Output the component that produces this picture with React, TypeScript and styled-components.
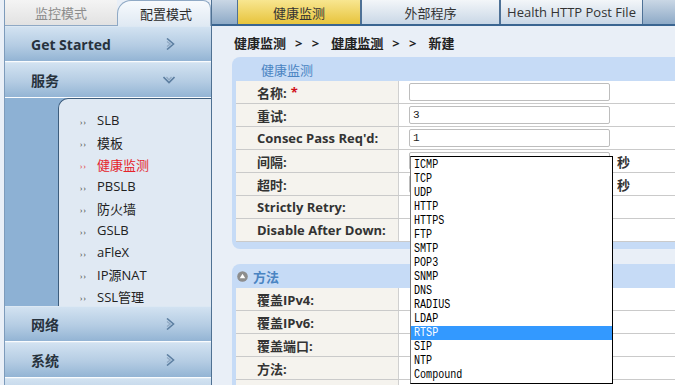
import React from 'react';
import styled, { createGlobalStyle } from 'styled-components';

const GlobalStyle = createGlobalStyle`
    html, body {
        margin: 0;
        padding: 0;
    }
    body {
        width: 675px;
        height: 385px;
        overflow: hidden;
        background: #e9eff7;
        font-family: "Open Sans", "Noto Sans CJK SC", sans-serif;
        font-size: 13px;
        color: #333;
    }
`

const Page = styled.div`
    display: flex;
    width: 675px;
    height: 385px;
    overflow: hidden;
`

/* ---------- sidebar ---------- */

const Sidebar = styled.div`
    width: 206px;
    flex-shrink: 0;
    margin-left: 4px;
    border-left: 1px solid #7d9bbb;
    border-right: 1px solid #4f7193;
    display: flex;
    flex-direction: column;
    background: #8db1d4;
    & > * {
        flex-shrink: 0;
    }
`

const ModeTabs = styled.div`
    display: flex;
    height: 26px;
    background: #e9eff7;
`

const ModeTab = styled.div<{ $active?: boolean }>`
    box-sizing: border-box;
    display: flex;
    align-items: center;
    justify-content: center;
    font-size: 13px;
    ${p => p.$active ? `
        flex: 1;
        color: #2b2b2b;
        background: linear-gradient(#f7fafd, #dfe9f3);
        border: 1px solid #8fa9c5;
        border-bottom: none;
        border-radius: 14px 8px 0 0;
        padding-left: 4px;
    ` : `
        width: 112px;
        color: #8c8c8c;
        background: linear-gradient(#f4f4f4, #e2e2e2);
        border-bottom: 1px solid #8fa9c5;
    `}
`

const SectionHeader = styled.div`
    height: 34px;
    border-top: 1px solid #dce8f3;
    border-bottom: 1px solid #fafcfe;
    background: linear-gradient(#d2e2f1, #b4cce3 55%, #93b4d4);
    display: flex;
    align-items: center;
    justify-content: space-between;
    padding: 0 36px 0 26px;
    font-size: 14px;
    font-weight: 700;
    color: #27323d;
`

const SubPanel = styled.div`
    display: flex;
    height: 208px;
`

const SubStrip = styled.div`
    width: 53px;
    background: #8db1d4;
`

const SubList = styled.div`
    flex: 1;
    background: #e0e9f3;
    border-left: 1px solid #3d5d7d;
    border-top: 1px solid #3d5d7d;
    border-top-left-radius: 10px;
    padding-top: 10px;
`

const SubItem = styled.div<{ $current?: boolean }>`
    height: 22px;
    display: flex;
    align-items: center;
    padding-left: 21px;
    font-size: 13px;
    color: ${p => p.$current ? '#e5232b' : '#222'};
`

const Bullet = styled.span<{ $current?: boolean }>`
    width: 17px;
    font-size: 8px;
    letter-spacing: 1px;
    padding-top: 2px;
    color: ${p => p.$current ? '#e5232b' : '#333'};
`

/* ---------- main ---------- */

const Main = styled.div`
    flex: 1;
    position: relative;
    display: flex;
    flex-direction: column;
    min-width: 0;
    & > * {
        flex-shrink: 0;
    }
`

const TabBar = styled.div`
    height: 24px;
    border-bottom: 2px solid #3a6591;
    background: linear-gradient(#cad7e5, #8eaac7);
    display: flex;
    padding-left: 25px;
`

const Tab = styled.div<{ $active?: boolean; $width: number }>`
    box-sizing: border-box;
    width: ${p => p.$width}px;
    display: flex;
    align-items: center;
    justify-content: center;
    border-left: 1px solid #4e7196;
    border-right: 1px solid #4e7196;
    font-size: 13px;
    color: #333;
    background: ${p => p.$active
        ? 'linear-gradient(#f8e690, #e7c43c)'
        : 'linear-gradient(#f3f6f9, #c9d7e6)'};
`

const Breadcrumb = styled.div`
    height: 31px;
    box-sizing: border-box;
    padding: 2px 0 0 22px;
    display: flex;
    align-items: center;
    gap: 9px;
    font-size: 13px;
    font-weight: 700;
    color: #222;
`

const CrumbSep = styled.span`
    letter-spacing: 3px;
`

const CrumbLink = styled.span`
    text-decoration: underline;
`

const Panel = styled.div<{ $gap?: number }>`
    margin-left: 20px;
    margin-top: ${p => p.$gap ?? 0}px;
    background: #c6dbf6;
    border-radius: 8px 0 0 8px;
    padding: 0 0 7px 4px;
`

const PanelHeader = styled.div<{ $indent: number; $bold?: boolean }>`
    height: 24px;
    display: flex;
    align-items: center;
    gap: 5px;
    padding-left: ${p => p.$indent}px;
    font-size: 13px;
    font-weight: ${p => p.$bold ? 700 : 400};
    color: #4a84c2;
`

const Row = styled.div`
    box-sizing: border-box;
    height: 23px;
    display: grid;
    grid-template-columns: 163px 1fr;
    border-bottom: 1px solid #cacaca;
`

const Label = styled.div`
    background: #f5f3ee;
    border-right: 1px solid #d0d0d0;
    display: flex;
    align-items: center;
    padding-left: 21px;
    font-size: 13px;
    font-weight: 700;
    color: #333;
`

const Required = styled.span`
    color: #d0101a;
    margin-left: 4px;
`

const Value = styled.div`
    background: #fff;
    display: flex;
    align-items: center;
    padding-left: 10px;
`

const TextInput = styled.input`
    box-sizing: border-box;
    width: 201px;
    height: 18px;
    border: 1px solid #bdbdbd;
    border-radius: 2px;
    padding: 0 3px;
    font-family: "Liberation Mono", monospace;
    font-size: 11px;
    color: #222;
    outline: none;
`

const Unit = styled.span`
    margin-left: 7px;
    font-size: 13px;
    font-weight: 700;
    color: #333;
`

const OptionList = styled.div`
    position: absolute;
    top: 156px;
    left: 198px;
    width: 203px;
    box-sizing: border-box;
    background: #fff;
    border: 1px solid #000;
    border-left-color: #7a7a7a;
    padding: 1px 0;
`

const Option = styled.div<{ $selected?: boolean }>`
    height: 14px;
    display: flex;
    align-items: center;
    padding-left: 3px;
    color: ${p => p.$selected ? '#fff' : '#000'};
    background: ${p => p.$selected ? '#3399ff' : 'transparent'};
`

const OptionText = styled.span`
    font-family: "Liberation Mono", monospace;
    font-size: 12px;
    line-height: 14px;
    transform: scaleX(0.84);
    transform-origin: left center;
    white-space: nowrap;
`

const ArrowRight = () => (
    <svg width="9" height="12" viewBox="0 0 9 12">
        <path d="M1 0.5 L7.5 6 L1 11.5" fill="none" stroke="#5d7fa1" strokeWidth="1.6" />
        <path d="M1 3.5 L4.3 6 L1 8.5" fill="none" stroke="#8fa8c2" strokeWidth="1.2" />
    </svg>
)

const ArrowDown = () => (
    <svg width="12" height="8" viewBox="0 0 12 8">
        <path d="M0.5 1 L6 6.5 L11.5 1" fill="none" stroke="#5d7fa1" strokeWidth="1.6" />
        <path d="M3.5 1 L6 3.8 L8.5 1" fill="none" stroke="#8fa8c2" strokeWidth="1.2" />
    </svg>
)

const CollapseIcon = () => (
    <svg width="11" height="11" viewBox="0 0 11 11">
        <circle cx="5.5" cy="5.5" r="5.3" fill="#8d8d8d" />
        <path d="M5.5 2.8 L8.3 7.3 L2.7 7.3 Z" fill="#fff" />
    </svg>
)

const services = ['SLB', '模板', '健康监测', 'PBSLB', '防火墙', 'GSLB', 'aFleX', 'IP源NAT', 'SSL管理']
const methods = ['ICMP', 'TCP', 'UDP', 'HTTP', 'HTTPS', 'FTP', 'SMTP', 'POP3', 'SNMP', 'DNS', 'RADIUS', 'LDAP', 'RTSP', 'SIP', 'NTP', 'Compound']

const App = () => {
    return (
        <Page>
            <GlobalStyle />
            <Sidebar>
                <ModeTabs>
                    <ModeTab>监控模式</ModeTab>
                    <ModeTab $active>配置模式</ModeTab>
                </ModeTabs>
                <SectionHeader>Get Started<ArrowRight /></SectionHeader>
                <SectionHeader>服务<ArrowDown /></SectionHeader>
                <SubPanel>
                    <SubStrip />
                    <SubList>
                        {services.map(s => (
                            <SubItem key={s} $current={s === '健康监测'}>
                                <Bullet $current={s === '健康监测'}>››</Bullet>{s}
                            </SubItem>
                        ))}
                    </SubList>
                </SubPanel>
                <SectionHeader>网络<ArrowRight /></SectionHeader>
                <SectionHeader>系统<ArrowRight /></SectionHeader>
                <SectionHeader />
            </Sidebar>

            <Main>
                <TabBar>
                    <Tab $active $width={124}>健康监测</Tab>
                    <Tab $width={139}>外部程序</Tab>
                    <Tab $width={143}>Health HTTP Post File</Tab>
                </TabBar>
                <Breadcrumb>
                    <span>健康监测</span>
                    <CrumbSep>&gt; &gt;</CrumbSep>
                    <CrumbLink>健康监测</CrumbLink>
                    <CrumbSep>&gt; &gt;</CrumbSep>
                    <span>新建</span>
                </Breadcrumb>

                <Panel>
                    <PanelHeader $indent={25}>健康监测</PanelHeader>
                    <Row><Label>名称:<Required>*</Required></Label><Value><TextInput defaultValue="" /></Value></Row>
                    <Row><Label>重试:</Label><Value><TextInput defaultValue="3" /></Value></Row>
                    <Row><Label>Consec Pass Req'd:</Label><Value><TextInput defaultValue="1" /></Value></Row>
                    <Row><Label>间隔:</Label><Value><TextInput defaultValue="5" /><Unit>秒</Unit></Value></Row>
                    <Row><Label>超时:</Label><Value><TextInput defaultValue="5" /><Unit>秒</Unit></Value></Row>
                    <Row><Label>Strictly Retry:</Label><Value /></Row>
                    <Row><Label>Disable After Down:</Label><Value /></Row>
                </Panel>

                <Panel $gap={15}>
                    <PanelHeader $indent={1} $bold><CollapseIcon />方法</PanelHeader>
                    <Row><Label>覆盖IPv4:</Label><Value /></Row>
                    <Row><Label>覆盖IPv6:</Label><Value /></Row>
                    <Row><Label>覆盖端口:</Label><Value /></Row>
                    <Row><Label>方法:</Label><Value /></Row>
                    <Row><Label /><Value /></Row>
                </Panel>

                <OptionList>
                    {methods.map(m => (
                        <Option key={m} $selected={m === 'RTSP'}><OptionText>{m}</OptionText></Option>
                    ))}
                </OptionList>
            </Main>
        </Page>
    )
}

export default App
